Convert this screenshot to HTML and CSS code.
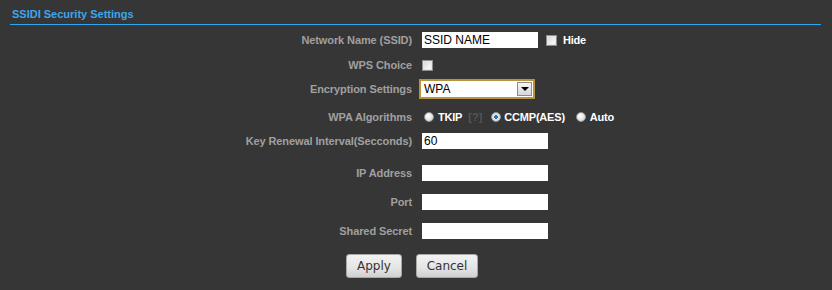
FILE: index.html
```html
<!DOCTYPE html>
<html lang="en">

<head>
  <meta charset="UTF-8">
  <title>SSID Security Settings</title>
  <link rel="stylesheet" href="styles.css">
</head>

<body>
  <div class="section">
    <div class="section-title">SSIDI Security Settings</div>

    <div class="form">
      <div class="row">
        <label class="field-label">Network Name (SSID)</label>
        <div class="field">
          <input class="text-input short" type="text" value="SSID NAME">
          <span class="check hide-check"></span>
          <span class="opt-label">Hide</span>
        </div>
      </div>

      <div class="row row-wps">
        <label class="field-label">WPS Choice</label>
        <div class="field">
          <span class="check"></span>
        </div>
      </div>

      <div class="row">
        <label class="field-label">Encryption Settings</label>
        <div class="field">
          <div class="select">
            <span class="select-value">WPA</span>
            <span class="select-arrow"></span>
          </div>
        </div>
      </div>

      <div class="row row-algo">
        <label class="field-label">WPA Algorithms</label>
        <div class="field">
          <span class="radio radio-tkip"></span>
          <span class="opt-label">TKIP</span>
          <span class="help">[?]</span>
          <span class="radio checked"></span>
          <span class="opt-label">CCMP(AES)</span>
          <span class="radio radio-auto"></span>
          <span class="opt-label">Auto</span>
        </div>
      </div>

      <div class="row">
        <label class="field-label">Key Renewal Interval(Secconds)</label>
        <div class="field">
          <input class="text-input" type="text" value="60">
        </div>
      </div>

      <div class="row row-ip">
        <label class="field-label">IP Address</label>
        <div class="field">
          <input class="text-input" type="text" value="">
        </div>
      </div>

      <div class="row row-radius">
        <label class="field-label">Port</label>
        <div class="field">
          <input class="text-input" type="text" value="">
        </div>
      </div>

      <div class="row row-radius">
        <label class="field-label">Shared Secret</label>
        <div class="field">
          <input class="text-input" type="text" value="">
        </div>
      </div>

      <div class="buttons">
        <button class="btn btn-apply" type="button">Apply</button>
        <button class="btn btn-cancel" type="button">Cancel</button>
      </div>
    </div>
  </div>
</body>

</html>
```

FILE: styles.css
```css
* {
  margin: 0;
  padding: 0;
  box-sizing: border-box;
}

body {
  background: #363636;
  font-family: 'Liberation Sans', Arial, sans-serif;
  font-size: 11px;
  width: 832px;
  height: 290px;
  overflow: hidden;
}

.section {
  margin: 0 11px 0 10px;
}

.section-title {
  height: 25px;
  padding: 8px 2px 0;
  line-height: 13px;
  font-weight: bold;
  color: #3aa7ee;
  border-bottom: 1px solid #2ea6f2;
}

.form {
  padding-top: 3px;
}

.row {
  display: flex;
  align-items: center;
  height: 24px;
}

.row-wps {
  margin-top: 1px;
}

.row-algo {
  margin-top: 4px;
}

.row-ip {
  margin-top: 8px;
}

.row-radius {
  margin-top: 5px;
}

.field-label {
  width: 402px;
  margin-right: 10px;
  text-align: right;
  font-weight: bold;
  letter-spacing: -0.1px;
  color: #a0a0a0;
}

.field {
  display: flex;
  align-items: center;
}

.text-input {
  width: 126px;
  height: 16px;
  border: none;
  outline: none;
  background: #fff;
  padding: 0 2px;
  font-family: 'Liberation Sans', Arial, sans-serif;
  font-size: 12px;
  color: #000;
}

.text-input.short {
  width: 116px;
}

.check {
  display: inline-block;
  width: 11px;
  height: 11px;
  border: 1px solid #8e8f8f;
  background: linear-gradient(135deg, #d4d4d4 0%, #f4f4f4 70%, #fff 100%);
  box-shadow: inset 0 0 0 1px #e6e6e6;
}

.hide-check {
  margin-left: 8px;
  margin-right: 6px;
}

.opt-label {
  font-weight: bold;
  color: #fff;
  letter-spacing: -0.2px;
}

.select {
  display: flex;
  align-items: center;
  justify-content: space-between;
  width: 116px;
  height: 20px;
  margin-left: -3px;
  border: 2px solid #b8923c;
  background: #fff;
  padding-left: 3px;
}

.select-value {
  font-size: 12px;
  color: #000;
}

.select-arrow {
  position: relative;
  width: 15px;
  height: 14px;
  margin-right: 1px;
  border: 1px solid #8c8c8c;
  background: linear-gradient(#f6f6f6, #d6d6d6);
}

.select-arrow::after {
  content: '';
  position: absolute;
  left: 3px;
  top: 4px;
  border-left: 4px solid transparent;
  border-right: 4px solid transparent;
  border-top: 4px solid #000;
}

.radio {
  display: inline-block;
  width: 10px;
  height: 10px;
  margin-right: 3px;
  border-radius: 50%;
  border: 1px solid #9a9a9a;
  background: radial-gradient(circle at 40% 35%, #ffffff 0%, #e4e4e4 55%, #c4c4c4 100%);
}

.radio-tkip {
  margin-left: 2px;
  margin-right: 4px;
}

.radio.checked {
  background: radial-gradient(circle, #2b8fd6 0%, #1f6fae 30%, #e8e8e8 38%, #d0d0d0 100%);
}

.radio-auto {
  margin-left: 11px;
  margin-right: 4px;
}

.help {
  margin: 0 9px 0 6px;
  font-weight: bold;
  color: #555;
}

.buttons {
  display: flex;
  gap: 14px;
  margin-top: 11px;
  padding-left: 336px;
  height: 24px;
}

.btn {
  height: 24px;
  border: 1px solid #a8a8a8;
  border-radius: 3px;
  background: linear-gradient(#f2f2f2 0%, #e4e4e4 60%, #d0d0d0 100%);
  font-family: 'DejaVu Sans', Tahoma, sans-serif;
  font-size: 12px;
  color: #333;
}

.btn-apply {
  width: 56px;
}

.btn-cancel {
  width: 62px;
}
```
